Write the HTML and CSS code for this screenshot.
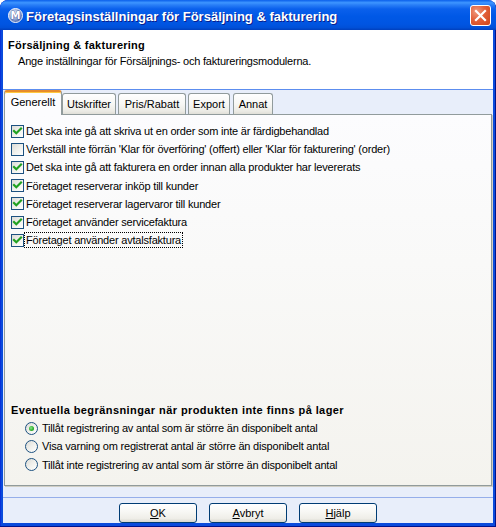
FILE: index.html
```html
<!DOCTYPE html>
<html>
<head>
<meta charset="utf-8">
<link rel="stylesheet" href="styles.css">
</head>
<body>
<div class="window">
  <div class="titlebar">
    <svg class="appicon" width="15" height="15" viewBox="0 0 15 15">
      <defs>
        <radialGradient id="ig" cx="0.4" cy="0.35" r="0.7">
          <stop offset="0" stop-color="#E4ECFA"/>
          <stop offset="0.6" stop-color="#8FA4D4"/>
          <stop offset="1" stop-color="#3D5AA6"/>
        </radialGradient>
      </defs>
      <circle cx="7.5" cy="7.5" r="7" fill="url(#ig)" stroke="#F2F6FF" stroke-width="1"/>
      <text x="7.5" y="11.3" text-anchor="middle" class="icon-m">M</text>
    </svg>
    <span class="title">Företagsinställningar för Försäljning &amp; fakturering</span>
    <div class="close">
      <svg width="21" height="21" viewBox="0 0 21 21">
        <path d="M6 6 L15 15 M15 6 L6 15" stroke="#fff" stroke-width="2.2" stroke-linecap="square"/>
      </svg>
    </div>
  </div>
  <div class="client">
    <div class="header">
      <div class="h-title">Försäljning &amp; fakturering</div>
      <div class="h-sub">Ange inställningar för Försäljnings- och faktureringsmodulerna.</div>
    </div>
    <div class="main">
      <div class="tabs">
        <div class="tab active">Generellt</div>
        <div class="tab t-utskrifter">Utskrifter</div>
        <div class="tab t-pris">Pris/Rabatt</div>
        <div class="tab t-export">Export</div>
        <div class="tab t-annat">Annat</div>
      </div>
      <div class="panel">
        <div class="checks">
          <div class="row"><span class="cb checked"><svg width="11" height="11" viewBox="0 0 11 11"><path d="M2 5 L4.3 7.3 L9 2.6" class="tick"/></svg></span><span class="lbl">Det ska inte gå att skriva ut en order som inte är färdigbehandlad</span></div>
          <div class="row"><span class="cb"></span><span class="lbl">Verkställ inte förrän 'Klar för överföring' (offert) eller 'Klar för fakturering' (order)</span></div>
          <div class="row"><span class="cb checked"><svg width="11" height="11" viewBox="0 0 11 11"><path d="M2 5 L4.3 7.3 L9 2.6" class="tick"/></svg></span><span class="lbl">Det ska inte gå att fakturera en order innan alla produkter har levererats</span></div>
          <div class="row"><span class="cb checked"><svg width="11" height="11" viewBox="0 0 11 11"><path d="M2 5 L4.3 7.3 L9 2.6" class="tick"/></svg></span><span class="lbl">Företaget reserverar inköp till kunder</span></div>
          <div class="row"><span class="cb checked"><svg width="11" height="11" viewBox="0 0 11 11"><path d="M2 5 L4.3 7.3 L9 2.6" class="tick"/></svg></span><span class="lbl">Företaget reserverar lagervaror till kunder</span></div>
          <div class="row"><span class="cb checked"><svg width="11" height="11" viewBox="0 0 11 11"><path d="M2 5 L4.3 7.3 L9 2.6" class="tick"/></svg></span><span class="lbl">Företaget använder servicefaktura</span></div>
          <div class="row"><span class="cb checked"><svg width="11" height="11" viewBox="0 0 11 11"><path d="M2 5 L4.3 7.3 L9 2.6" class="tick"/></svg></span><span class="lbl focus">Företaget använder avtalsfaktura</span></div>
        </div>
        <div class="group">
          <div class="g-title">Eventuella begränsningar när produkten inte finns på lager</div>
          <div class="radio-row"><span class="rb on"><span class="dot"></span></span><span class="lbl">Tillåt registrering av antal som är större än disponibelt antal</span></div>
          <div class="radio-row"><span class="rb"></span><span class="lbl">Visa varning om registrerat antal är större än disponibelt antal</span></div>
          <div class="radio-row"><span class="rb"></span><span class="lbl">Tillåt inte registrering av antal som är större än disponibelt antal</span></div>
        </div>
      </div>
    </div>
    <div class="footer">
      <div class="btnbar">
        <button class="btn"><u>O</u>K</button>
        <button class="btn"><u>A</u>vbryt</button>
        <button class="btn"><u>H</u>jälp</button>
      </div>
    </div>
  </div>
</div>
</body>
</html>
```

FILE: styles.css
```css
* { box-sizing: border-box; }
html, body { margin: 0; padding: 0; }
body {
  width: 496px;
  height: 527px;
  overflow: hidden;
  background: #ffffff;
  font-family: "Liberation Sans", Arial, sans-serif;
  font-size: 11px;
  letter-spacing: -0.2px;
  color: #000;
}
.window {
  width: 496px;
  height: 527px;
  display: flex;
  flex-direction: column;
  background: #0A4BDC;
  border-radius: 8px 8px 0 0;
  overflow: hidden;
  box-shadow: inset -1px -1px 0 #00138C, inset 1px 0 0 #0831D9;
}
.titlebar {
  height: 30px;
  flex: none;
  display: flex;
  align-items: center;
  padding: 0 5px 0 8px;
  background: linear-gradient(to bottom, #0A5FEB 0%, #3D95FF 9%, #2A7FF7 16%, #0A60EC 30%, #0058E6 55%, #0055E2 80%, #0050D8 92%, #003FBC 100%);
  border-radius: 8px 8px 0 0;
}
.appicon { flex: none; }
.icon-m {
  font-family: "DejaVu Sans", sans-serif;
  font-weight: bold;
  font-size: 10px;
  fill: #ffffff;
  stroke: #1B2F72;
  stroke-width: 0.6;
  paint-order: stroke;
}
.title {
  margin-left: 3px;
  margin-top: 2px;
  color: #ffffff;
  font-weight: bold;
  font-size: 13px;
  font-family: "Liberation Sans", Arial, sans-serif;
  text-shadow: 1px 1px 0 #0A1E8C;
  letter-spacing: 0;
  white-space: nowrap;
}
.close {
  margin-left: auto;
  width: 21px;
  height: 21px;
  border: 1px solid #ffffff;
  border-radius: 3px;
  background: radial-gradient(circle at 30% 30%, #F09A7E 0%, #E2603A 45%, #CC4418 100%);
  display: flex;
  align-items: center;
  justify-content: center;
  margin-top: 1px;
}
.close svg { display: block; margin: -1px; }

.client {
  flex: 1;
  margin: 0 3px 4px 3px;
  display: flex;
  flex-direction: column;
  background: #E8EEFA;
}
.header {
  height: 60px;
  flex: none;
  background: #ffffff;
  border-bottom: 1px solid #5C8DEF;
  padding: 8px 0 0 5px;
}
.h-title {
  font-weight: bold;
  line-height: 14px;
  letter-spacing: 0.25px;
}
.h-sub {
  margin-top: 2px;
  padding-left: 10px;
  line-height: 14px;
}
.main {
  flex: 1;
  display: flex;
  flex-direction: column;
  padding: 0 1px;
}
.tabs {
  height: 24px;
  flex: none;
  display: flex;
  align-items: flex-end;
}
.tab {
  height: 21px;
  border: 1px solid #919B9C;
  border-bottom: none;
  border-radius: 3px 3px 0 0;
  background: linear-gradient(to bottom, #FFFFFF 0%, #F7F7F4 50%, #ECEBE5 85%, #E0DFD8 100%);
  text-align: center;
  line-height: 20px;
  white-space: nowrap;
  letter-spacing: 0;
}
.tab.active {
  width: 58px;
  height: 25px;
  margin-bottom: -1px;
  position: relative;
  z-index: 1;
  background: #FCFCFE;
  border-top: 2px solid #E68B2C;
  box-shadow: inset 0 1px 0 #FFC73C;
  line-height: 21px;
}
.t-utskrifter { width: 54px; margin-left: 0; }
.t-pris { width: 68px; margin-left: 2px; }
.t-export { width: 42px; margin-left: 2px; }
.t-annat { width: 40px; margin-left: 3px; }

.panel {
  flex: 1;
  border: 1px solid #919B9C;
  background: linear-gradient(to bottom, #FCFCFE 0%, #F9F9F8 40%, #F4F3EE 100%);
  box-shadow: 1px 1px 0 #D0CEC4;
  display: flex;
  flex-direction: column;
  padding: 7px 6px 11px 6px;
}
.row {
  height: 18.2px;
  display: flex;
  align-items: center;
}
.cb {
  flex: none;
  width: 13px;
  height: 13px;
  border: 1px solid #1C5180;
  background: linear-gradient(135deg, #DCDCD7 0%, #F0F0EC 50%, #FFFFFF 100%);
  display: flex;
  align-items: center;
  justify-content: center;
  margin-right: 2px;
}
.cb svg { display: block; }
.tick {
  fill: none;
  stroke: #21A121;
  stroke-width: 2.2;
  stroke-linecap: square;
}
.lbl { white-space: nowrap; line-height: 14px; }
.focus {
  outline: 1px dotted #000;
  outline-offset: 0;
  padding: 0 1px;
  margin-left: -1px;
}
.group { margin-top: auto; }
.g-title {
  font-weight: bold;
  line-height: 18px;
  height: 18px;
  letter-spacing: 0.42px;
}
.radio-row {
  height: 18.4px;
  display: flex;
  align-items: center;
  padding-left: 14px;
}
.rb {
  flex: none;
  width: 13px;
  height: 13px;
  border: 1px solid #1C5180;
  border-radius: 50%;
  background: linear-gradient(135deg, #DCDCD7 0%, #F0F0EC 50%, #FFFFFF 100%);
  margin-right: 4px;
  display: flex;
  align-items: center;
  justify-content: center;
}
.dot {
  width: 5px;
  height: 5px;
  border-radius: 50%;
  background: radial-gradient(circle at 40% 40%, #8EE88E 0%, #2DB12D 55%, #168E16 100%);
}
.footer {
  height: 37px;
  flex: none;
  padding-top: 11px;
}
.btnbar {
  border-top: 1px solid #95AEEA;
  padding-top: 5px;
  display: flex;
  justify-content: center;
  gap: 12px;
}
.btn {
  width: 78px;
  height: 20px;
  border: 1px solid #003C74;
  border-radius: 3px;
  background: linear-gradient(to bottom, #FFFFFF 0%, #F8F8F5 40%, #EFEEE8 80%, #D8D7CF 100%);
  font-family: "Liberation Sans", Arial, sans-serif;
  font-size: 11px;
  letter-spacing: 0;
  color: #000;
  padding: 0;
  line-height: 18px;
}
.btn u { text-decoration: underline; }
```
